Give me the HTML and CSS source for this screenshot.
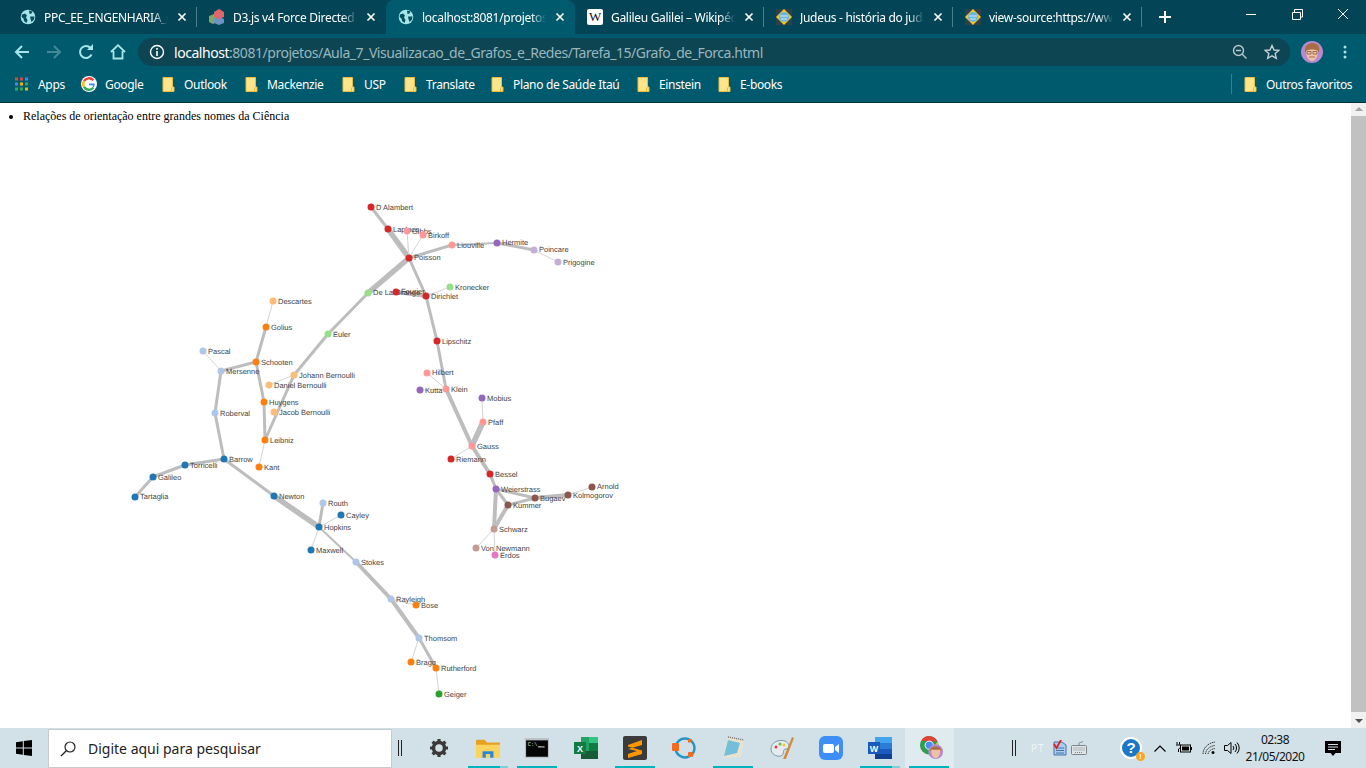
FILE: index.html
```html
<!DOCTYPE html>
<html lang="pt-BR">
<head>
<meta charset="utf-8">
<title>Grafo de Força</title>
<link rel="stylesheet" href="styles.css">
</head>
<body>
<svg class="defs" width="0" height="0" aria-hidden="true">
  <symbol id="globe" viewBox="0 0 16 16">
    <circle cx="8" cy="8" r="7.3" fill="#a6e6e8"/>
    <path d="M2 5.5 5 4.5 7 6.5 6 8.5 7.5 11 6.5 14 4 12 3.5 9.5 1.5 8ZM9 1.5 12.5 2.5 11.5 4.5 9.5 5ZM10 7.5 14.5 7.5 14 10.5 11.5 13 10.5 10Z" fill="#04505f"/>
  </symbol>
  <symbol id="x" viewBox="0 0 10 10">
    <path d="M1.5 1.5 8.5 8.5M8.5 1.5 1.5 8.5" stroke="#fff" stroke-width="1.7" fill="none"/>
  </symbol>
  <symbol id="folder" viewBox="0 0 12 15">
    <path d="M.5.5H10V10H11.5V14.5H.5Z" fill="#fee58c" stroke="#e8bd3c"/>
    <path d="M9 10.500V14" stroke="#e8bd3c"/>
  </symbol>
  <symbol id="diamond" viewBox="0 0 16 16">
    <rect width="16" height="16" fill="#30404a"/>
    <path d="M8 0 16 8 8 16 0 8Z" fill="#f4c81e"/>
    <circle cx="8" cy="8" r="5" fill="#6cb4e4"/>
    <path d="M4 7H12M5 10H11" stroke="#d6ecf8"/>
  </symbol>
</svg>

<header class="chrome">
  <div class="tabstrip">
    <div class="tab">
      <svg class="fav"><use href="#globe"/></svg>
      <span class="tab-title">PPC_EE_ENGENHARIA_Computação</span>
      <svg class="tab-x"><use href="#x"/></svg>
    </div>
    <div class="tab">
      <svg class="fav" viewBox="0 0 16 16">
        <path d="M0 7 5 5 8 7V13L4 15 0 13Z" fill="#7ca86c"/>
        <path d="M5 10 10 8 15 10V14L10 16 5 14Z" fill="#6f92c4"/>
        <path d="M5 3 10 0 15 3V8L10 10 5 8Z" fill="#e0666c"/>
      </svg>
      <span class="tab-title">D3.js v4 Force Directed Graph</span>
      <svg class="tab-x"><use href="#x"/></svg>
    </div>
    <div class="tab active">
      <svg class="fav"><use href="#globe"/></svg>
      <span class="tab-title">localhost:8081/projetos/Aula_7</span>
      <svg class="tab-x"><use href="#x"/></svg>
    </div>
    <div class="tab">
      <span class="fav-w">W</span>
      <span class="tab-title">Galileu Galilei – Wikipédia</span>
      <svg class="tab-x"><use href="#x"/></svg>
    </div>
    <div class="tab">
      <svg class="fav"><use href="#diamond"/></svg>
      <span class="tab-title">Judeus - história do judaísmo</span>
      <svg class="tab-x"><use href="#x"/></svg>
    </div>
    <div class="tab">
      <svg class="fav"><use href="#diamond"/></svg>
      <span class="tab-title">view-source:https://www.judeus</span>
      <svg class="tab-x"><use href="#x"/></svg>
    </div>
    <svg class="newtab" viewBox="0 0 12 12"><path d="M6 0V12M0 6H12" stroke="#fff" stroke-width="2"/></svg>
    <div class="winctl">
      <svg viewBox="0 0 46 30"><path d="M18 14.500H28" stroke="#fff"/></svg>
      <svg viewBox="0 0 46 30"><path d="M18.500 12.500H26.500V19.500H18.500ZM20.500 12V9.500H28.500V17H27" stroke="#fff" fill="none"/></svg>
      <svg viewBox="0 0 46 30"><path d="M18 9 28 19M28 9 18 19" stroke="#fff" fill="none"/></svg>
    </div>
  </div>

  <div class="toolbar">
    <svg class="tb-icon" viewBox="0 0 16 16"><path d="M15 8H2M8 2 2 8 8 14" stroke="#a6e6e8" stroke-width="2" fill="none"/></svg>
    <svg class="tb-icon" viewBox="0 0 16 16"><path d="M1 8H14M8 2 14 8 8 14" stroke="#3f8a96" stroke-width="2" fill="none"/></svg>
    <svg class="tb-icon" viewBox="0 0 16 16"><path d="M13.500 10.500A6 6 0 1 1 12.500 4" stroke="#a6e6e8" stroke-width="2" fill="none"/><path d="M9 6H15V0Z" fill="#a6e6e8"/></svg>
    <svg class="tb-icon" viewBox="0 0 16 16"><path d="M1 8 8 1.200 15 8M3.500 7V14.500H12.500V7" stroke="#a6e6e8" stroke-width="1.800" fill="none"/></svg>
    <div class="omnibox">
      <svg class="info" viewBox="0 0 16 16"><circle cx="8" cy="8" r="6.500" stroke="#fff" stroke-width="1.400" fill="none"/><path d="M8 7V12M8 4V5.800" stroke="#fff" stroke-width="1.600"/></svg>
      <span class="url"><b>localhost</b>:8081/projetos/Aula_7_Visualizacao_de_Grafos_e_Redes/Tarefa_15/Grafo_de_Forca.html</span>
      <svg class="omni-r" viewBox="0 0 16 16"><circle cx="6.500" cy="6.500" r="5" stroke="#b9c8cc" stroke-width="1.400" fill="none"/><path d="M4 6.500H9M10 10 14.500 14.500" stroke="#b9c8cc" stroke-width="1.400"/></svg>
      <svg class="omni-r" viewBox="0 0 16 16"><path d="M8 1.500 10 6 14.800 6.400 11.200 9.600 12.300 14.400 8 11.800 3.700 14.400 4.800 9.600 1.200 6.400 6 6Z" stroke="#c6d2d5" stroke-width="1.400" fill="none"/></svg>
    </div>
    <svg class="avatar" viewBox="0 0 22 22">
      <circle cx="11" cy="11" r="11" fill="#b78ad0"/>
      <path d="M4 11C3 4 8 2 12 2 17 2 19 6 18 11Z" fill="#a86d42"/>
      <path d="M5 10C7 8 15 8 17 10 17 16 14 20 11 20 8 20 5 16 5 10Z" fill="#eec0a4"/>
      <path d="M6 10.500H10V13H6ZM12 10.500H16V13H12Z" fill="none" stroke="#7a5238" stroke-width=".7"/>
      <path d="M8 16H14" stroke="#b06e5a"/>
    </svg>
    <svg class="menu" viewBox="0 0 4 14"><circle cx="2" cy="2" r="1.500" fill="#a6e6e8"/><circle cx="2" cy="7" r="1.500" fill="#a6e6e8"/><circle cx="2" cy="12" r="1.500" fill="#a6e6e8"/></svg>
  </div>

  <nav class="bookmarks">
    <div class="bm bm-apps">
      <svg class="bm-icon" viewBox="0 0 13 14">
        <path d="M0 0H3V3H0Z" fill="#e0483c"/><path d="M5 0H8V3H5Z" fill="#e0483c"/><path d="M10 0H13V3H10Z" fill="#4285f4"/>
        <path d="M0 5H3V8H0Z" fill="#4285f4"/><path d="M5 5H8V8H5Z" fill="#f4b400"/><path d="M10 5H13V8H10Z" fill="#34a853"/>
        <path d="M0 10H3V13H0Z" fill="#34a853"/><path d="M5 10H8V13H5Z" fill="#34a853"/><path d="M10 10H13V13H10Z" fill="#f4b400"/>
      </svg><span>Apps</span>
    </div>
    <div class="bm bm-google">
      <svg class="bm-icon" viewBox="0 0 16 16">
        <circle cx="8" cy="8" r="8" fill="#fff"/>
        <path d="M12.300 4.300A5.700 5.700 0 0 0 3 5.200" stroke="#ea4335" stroke-width="2.400" fill="none"/>
        <path d="M3 5.200A5.700 5.700 0 0 0 3 10.800" stroke="#fbbc05" stroke-width="2.400" fill="none"/>
        <path d="M3 10.800A5.700 5.700 0 0 0 12.300 11.800" stroke="#34a853" stroke-width="2.400" fill="none"/>
        <path d="M12.300 11.800C13.500 10.500 13.800 9 13.600 7.500H8V9.300H11.500" fill="#4285f4"/>
      </svg><span>Google</span>
    </div>
    <div class="bm"><svg class="bm-icon"><use href="#folder"/></svg><span>Outlook</span></div>
    <div class="bm"><svg class="bm-icon"><use href="#folder"/></svg><span>Mackenzie</span></div>
    <div class="bm"><svg class="bm-icon"><use href="#folder"/></svg><span>USP</span></div>
    <div class="bm"><svg class="bm-icon"><use href="#folder"/></svg><span>Translate</span></div>
    <div class="bm"><svg class="bm-icon"><use href="#folder"/></svg><span>Plano de Saúde Itaú</span></div>
    <div class="bm"><svg class="bm-icon"><use href="#folder"/></svg><span>Einstein</span></div>
    <div class="bm"><svg class="bm-icon"><use href="#folder"/></svg><span>E-books</span></div>
    <div class="bm bm-other"><svg class="bm-icon"><use href="#folder"/></svg><span>Outros favoritos</span></div>
  </nav>
</header>

<div class="viewport">
  <main class="page">
    <ul class="intro"><li>Relações de orientação entre grandes nomes da Ciência</li></ul>
    <svg class="graph" viewBox="0 125 1351 603" role="img" aria-label="Grafo de força">
      <g class="links">
        <line class="w3" x1="371" y1="207" x2="388" y2="229"/>
        <line class="w5" x1="388" y1="229" x2="409" y2="258"/>
        <line class="w1" x1="407" y1="231" x2="409" y2="258"/>
        <line class="w1" x1="423" y1="235" x2="409" y2="258"/>
        <line class="w3" x1="409" y1="258" x2="452" y2="245"/>
        <line class="w2" x1="452" y1="245" x2="497" y2="243"/>
        <line class="w3" x1="497" y1="243" x2="534" y2="250"/>
        <line class="w1" x1="534" y1="250" x2="558" y2="262"/>
        <line class="w5" x1="409" y1="258" x2="368" y2="293"/>
        <line class="w3" x1="368" y1="293" x2="328" y2="334"/>
        <line class="w3" x1="328" y1="334" x2="294" y2="375"/>
        <line class="w1" x1="294" y1="375" x2="269" y2="385"/>
        <line class="w3" x1="294" y1="375" x2="265" y2="440"/>
        <line class="w3" x1="264" y1="402" x2="265" y2="440"/>
        <line class="w3" x1="264" y1="402" x2="256" y2="362"/>
        <line class="w3" x1="256" y1="362" x2="266" y2="327"/>
        <line class="w1" x1="266" y1="327" x2="273" y2="301"/>
        <line class="w3" x1="256" y1="362" x2="221" y2="371"/>
        <line class="w1" x1="221" y1="371" x2="203" y2="351"/>
        <line class="w3" x1="221" y1="371" x2="215" y2="413"/>
        <line class="w3" x1="215" y1="413" x2="224" y2="459"/>
        <line class="w1" x1="265" y1="440" x2="259" y2="467"/>
        <line class="w3" x1="224" y1="459" x2="185" y2="465"/>
        <line class="w3" x1="185" y1="465" x2="153" y2="477"/>
        <line class="w3" x1="153" y1="477" x2="135" y2="497"/>
        <line class="w3" x1="224" y1="459" x2="274" y2="496"/>
        <line class="w5" x1="274" y1="496" x2="319" y2="527"/>
        <line class="w3" x1="319" y1="527" x2="323" y2="503"/>
        <line class="w1" x1="319" y1="527" x2="341" y2="515"/>
        <line class="w1" x1="319" y1="527" x2="311" y2="550"/>
        <line class="w2" x1="319" y1="527" x2="356" y2="562"/>
        <line class="w4" x1="356" y1="562" x2="391" y2="599"/>
        <line class="w1" x1="391" y1="599" x2="416" y2="605"/>
        <line class="w4" x1="391" y1="599" x2="419" y2="638"/>
        <line class="w1" x1="419" y1="638" x2="411" y2="662"/>
        <line class="w3" x1="419" y1="638" x2="436" y2="668"/>
        <line class="w1" x1="436" y1="668" x2="439" y2="694"/>
        <line class="w3" x1="409" y1="258" x2="426" y2="296"/>
        <line class="w4" x1="396" y1="292" x2="426" y2="296"/>
        <line class="w1" x1="426" y1="296" x2="450" y2="287"/>
        <line class="w3" x1="426" y1="296" x2="437" y2="341"/>
        <line class="w3" x1="437" y1="341" x2="446" y2="389"/>
        <line class="w1" x1="446" y1="389" x2="427" y2="373"/>
        <line class="w1" x1="446" y1="389" x2="420" y2="390"/>
        <line class="w4" x1="446" y1="389" x2="472" y2="446"/>
        <line class="w5" x1="472" y1="446" x2="483" y2="422"/>
        <line class="w1" x1="483" y1="422" x2="482" y2="398"/>
        <line class="w1" x1="472" y1="446" x2="451" y2="459"/>
        <line class="w4" x1="472" y1="446" x2="490" y2="474"/>
        <line class="w3" x1="490" y1="474" x2="496" y2="489"/>
        <line class="w3" x1="496" y1="489" x2="535" y2="498"/>
        <line class="w3" x1="496" y1="489" x2="508" y2="505"/>
        <line class="w3" x1="535" y1="498" x2="508" y2="505"/>
        <line class="w4" x1="535" y1="498" x2="568" y2="495"/>
        <line class="w1" x1="568" y1="495" x2="592" y2="487"/>
        <line class="w4" x1="508" y1="505" x2="494" y2="529"/>
        <line class="w4" x1="496" y1="489" x2="494" y2="529"/>
        <line class="w1" x1="494" y1="529" x2="476" y2="548"/>
        <line class="w1" x1="494" y1="529" x2="495" y2="555"/>
      </g>
      <g class="labels">
        <text x="376" y="210">D Alambert</text><text x="393" y="232">Laplace</text><text x="412" y="234">Gibbs</text><text x="428" y="238">Birkoff</text>
        <text x="457" y="248">Liouville</text><text x="502" y="245">Hermite</text><text x="539" y="252">Poincare</text><text x="563" y="265">Prigogine</text>
        <text x="414" y="260">Poisson</text><text x="373" y="295">De La Grange</text><text x="401" y="294">Fourier</text><text x="431" y="299">Dirichlet</text>
        <text x="455" y="290">Kronecker</text><text x="442" y="344">Lipschitz</text><text x="333" y="337">Euler</text><text x="278" y="304">Descartes</text>
        <text x="271" y="330">Golius</text><text x="261" y="365">Schooten</text><text x="208" y="354">Pascal</text><text x="226" y="374">Mersenne</text>
        <text x="299" y="378">Johann Bernoulli</text><text x="274" y="388">Daniel Bernoulli</text><text x="269" y="405">Huygens</text><text x="279" y="415">Jacob Bernoulli</text>
        <text x="220" y="416">Roberval</text><text x="270" y="443">Leibniz</text><text x="264" y="470">Kant</text><text x="229" y="462">Barrow</text>
        <text x="190" y="468">Torricelli</text><text x="158" y="480">Galileo</text><text x="140" y="499">Tartaglia</text><text x="279" y="499">Newton</text>
        <text x="328" y="506">Routh</text><text x="346" y="518">Cayley</text><text x="324" y="530">Hopkins</text><text x="316" y="553">Maxwell</text>
        <text x="361" y="565">Stokes</text><text x="396" y="602">Rayleigh</text><text x="421" y="608">Bose</text><text x="424" y="641">Thomsom</text>
        <text x="416" y="665">Bragg</text><text x="441" y="671">Rutherford</text><text x="444" y="697">Geiger</text><text x="432" y="375">Hilbert</text>
        <text x="425" y="393">Kutta</text><text x="451" y="392">Klein</text><text x="487" y="401">Mobius</text><text x="488" y="425">Pfaff</text>
        <text x="477" y="449">Gauss</text><text x="456" y="462">Riemann</text><text x="495" y="477">Bessel</text><text x="501" y="492">Weierstrass</text>
        <text x="540" y="501">Bugaev</text><text x="573" y="498">Kolmogorov</text><text x="597" y="489">Arnold</text><text x="513" y="508">Kummer</text>
        <text x="499" y="532">Schwarz</text><text x="481" y="551">Von Newmann</text><text x="500" y="558">Erdos</text>
      </g>
      <g class="nodes">
        <circle class="n-red" cx="371" cy="207" r="3.500"/><circle class="n-red" cx="388" cy="229" r="3.500"/><circle class="n-pink" cx="407" cy="231" r="3.500"/><circle class="n-pink" cx="423" cy="235" r="3.500"/>
        <circle class="n-pink" cx="452" cy="245" r="3.500"/><circle class="n-purple" cx="497" cy="243" r="3.500"/><circle class="n-lilac" cx="534" cy="250" r="3.500"/><circle class="n-lilac" cx="558" cy="262" r="3.500"/>
        <circle class="n-red" cx="409" cy="258" r="3.500"/><circle class="n-lime" cx="368" cy="293" r="3.500"/><circle class="n-red" cx="396" cy="292" r="3.500"/><circle class="n-red" cx="426" cy="296" r="3.500"/>
        <circle class="n-lime" cx="450" cy="287" r="3.500"/><circle class="n-red" cx="437" cy="341" r="3.500"/><circle class="n-lime" cx="328" cy="334" r="3.500"/><circle class="n-peach" cx="273" cy="301" r="3.500"/>
        <circle class="n-orange" cx="266" cy="327" r="3.500"/><circle class="n-orange" cx="256" cy="362" r="3.500"/><circle class="n-sky" cx="203" cy="351" r="3.500"/><circle class="n-sky" cx="221" cy="371" r="3.500"/>
        <circle class="n-peach" cx="294" cy="375" r="3.500"/><circle class="n-peach" cx="269" cy="385" r="3.500"/><circle class="n-orange" cx="264" cy="402" r="3.500"/><circle class="n-peach" cx="274" cy="412" r="3.500"/>
        <circle class="n-sky" cx="215" cy="413" r="3.500"/><circle class="n-orange" cx="265" cy="440" r="3.500"/><circle class="n-orange" cx="259" cy="467" r="3.500"/><circle class="n-blue" cx="224" cy="459" r="3.500"/>
        <circle class="n-blue" cx="185" cy="465" r="3.500"/><circle class="n-blue" cx="153" cy="477" r="3.500"/><circle class="n-blue" cx="135" cy="497" r="3.500"/><circle class="n-blue" cx="274" cy="496" r="3.500"/>
        <circle class="n-sky" cx="323" cy="503" r="3.500"/><circle class="n-blue" cx="341" cy="515" r="3.500"/><circle class="n-blue" cx="319" cy="527" r="3.500"/><circle class="n-blue" cx="311" cy="550" r="3.500"/>
        <circle class="n-sky" cx="356" cy="562" r="3.500"/><circle class="n-sky" cx="391" cy="599" r="3.500"/><circle class="n-orange" cx="416" cy="605" r="3.500"/><circle class="n-sky" cx="419" cy="638" r="3.500"/>
        <circle class="n-orange" cx="411" cy="662" r="3.500"/><circle class="n-orange" cx="436" cy="668" r="3.500"/><circle class="n-green" cx="439" cy="694" r="3.500"/><circle class="n-pink" cx="427" cy="373" r="3.500"/>
        <circle class="n-purple" cx="420" cy="390" r="3.500"/><circle class="n-pink" cx="446" cy="389" r="3.500"/><circle class="n-purple" cx="482" cy="398" r="3.500"/><circle class="n-pink" cx="483" cy="422" r="3.500"/>
        <circle class="n-pink" cx="472" cy="446" r="3.500"/><circle class="n-red" cx="451" cy="459" r="3.500"/><circle class="n-red" cx="490" cy="474" r="3.500"/><circle class="n-purple" cx="496" cy="489" r="3.500"/>
        <circle class="n-brown" cx="535" cy="498" r="3.500"/><circle class="n-brown" cx="568" cy="495" r="3.500"/><circle class="n-brown" cx="592" cy="487" r="3.500"/><circle class="n-brown" cx="508" cy="505" r="3.500"/>
        <circle class="n-tan" cx="494" cy="529" r="3.500"/><circle class="n-tan" cx="476" cy="548" r="3.500"/><circle class="n-magenta" cx="495" cy="555" r="3.500"/>
      </g>
    </svg>
  </main>
  <div class="scrollbar">
    <span class="arrow-up"></span>
    <div class="thumb"></div>
    <span class="arrow-down"></span>
  </div>
</div>

<footer class="taskbar">
  <svg class="start" viewBox="0 0 16 16"><path d="M0 2.300 6.800 1.300V7.500H0ZM7.800 1.100 16 0V7.500H7.800ZM0 8.500H6.800V14.700L0 13.700ZM7.800 8.500H16V16L7.800 14.900Z" fill="#000"/></svg>
  <div class="search">
    <svg class="search-ico" viewBox="0 0 16 16"><circle cx="10" cy="6" r="5" stroke="#222" stroke-width="1.200" fill="none"/><path d="M6.300 9.700 1 15" stroke="#222" stroke-width="1.300"/></svg>
    <span>Digite aqui para pesquisar</span>
  </div>
  <span class="grip"></span>
  <div class="tb-apps">
    <div class="app app-gear">
      <svg viewBox="0 0 20 20"><circle cx="10" cy="10" r="5.500" fill="none" stroke="#3a3a3a" stroke-width="3.500"/><path d="M10 1V4M10 16V19M1 10H4M16 10H19M3.600 3.600 5.800 5.800M14.200 14.200 16.400 16.400M16.400 3.600 14.200 5.800M5.800 14.200 3.600 16.400" stroke="#3a3a3a" stroke-width="3.200"/></svg>
    </div>
    <div class="app run split">
      <svg viewBox="0 0 22 20"><path d="M0 3.500A1 1 0 0 1 1 2.500H8L10 5H22V18H0Z" fill="#e8a020"/><path d="M0 7H22V19H0Z" fill="#fbd35f"/><path d="M6 19V13H16V19H13V15.500H9V19Z" fill="#2b88d8"/></svg>
    </div>
    <div class="app run">
      <svg viewBox="0 0 22 20"><rect y="1" width="22" height="18" fill="#b9bec2"/><rect x="1" y="3" width="20" height="15" fill="#050505"/><text class="cmd-text" x="2.500" y="8.500">C:\_</text><path d="M12 9H18" stroke="#ccc"/></svg>
    </div>
    <div class="app">
      <svg viewBox="0 0 24 24"><rect x="7" y="1" width="17" height="22" fill="#21a366"/><rect x="15" y="1" width="9" height="6" fill="#33c481"/><rect x="15" y="7" width="9" height="8" fill="#107c41"/><rect x="7" y="15" width="17" height="8" fill="#185c37"/><rect y="6" width="12" height="12" fill="#107c41"/><text class="x-text" x="6" y="15.500">X</text></svg>
    </div>
    <div class="app run">
      <svg viewBox="0 0 24 24"><rect width="24" height="24" rx="2" fill="#3b3b3b"/><path d="M19 4 5 9V13L19 9ZM5 10.500 19 14.500V18L5 22V18L14 15 5 13Z" fill="#ff9800"/></svg>
    </div>
    <div class="app">
      <svg viewBox="0 0 24 24"><circle cx="13" cy="12" r="9.500" fill="none" stroke="#2596c4" stroke-width="2.400"/><rect y="7" width="7" height="8" rx="1" fill="#f26c1f"/><rect x="16" y="16" width="5" height="5" rx="1" fill="#f26c1f"/><rect x="16" y="3" width="3.500" height="3.500" fill="#f26c1f"/></svg>
    </div>
    <div class="app run">
      <svg viewBox="0 0 24 24"><path d="M7 1 23 4 20 21 2 22Z" fill="#e8e2d0"/><path d="M7 4 19 7 16 17 3 20Z" fill="#74bfd8"/><path d="M7 1 23 4" stroke="#777" stroke-width="1.500" stroke-dasharray="1 1"/></svg>
    </div>
    <div class="app">
      <svg viewBox="0 0 24 24"><path d="M1 13C1 6 9 3 15 5 20 7 20 13 16 13 12 13 15 18 11 20 6 21 1 18 1 13Z" fill="#e5ecf0" stroke="#7e98a8"/><circle cx="6" cy="11" r="1.500" fill="#e03c3c"/><circle cx="10" cy="8" r="1.500" fill="#6fb83c"/><circle cx="14" cy="9" r="1.500" fill="#e8c93c"/><path d="M13 23 22 1 24 2 16 23Z" fill="#d28d3c"/></svg>
    </div>
    <div class="app">
      <svg viewBox="0 0 24 24"><rect width="24" height="24" rx="6" fill="#3d8ff5"/><rect x="4" y="8" width="11" height="9" rx="2" fill="#fff"/><path d="M16 11 20 8V17L16 14Z" fill="#fff"/></svg>
    </div>
    <div class="app run split">
      <svg viewBox="0 0 24 24"><rect x="7" y="1" width="17" height="22" fill="#2b7cd3"/><rect x="7" y="1" width="17" height="6" fill="#41a5ee"/><rect x="7" y="13" width="17" height="5" fill="#185abd"/><rect x="7" y="18" width="17" height="5" fill="#103f91"/><rect y="6" width="12" height="12" fill="#185abd"/><text class="x-text" x="6" y="15.500">W</text></svg>
    </div>
    <div class="app run active">
      <svg class="chrome-ico" viewBox="0 0 26 26">
        <circle cx="10" cy="10" r="10" fill="#2f9e4f"/>
        <path d="M1.300 5A10 10 0 0 1 19 6H10Z" fill="#e0433a"/>
        <path d="M19 6A10 10 0 0 1 12 19.800L15 12Z" fill="#f8c72e"/>
        <circle cx="10" cy="10" r="4.500" fill="#4a8cf0" stroke="#fff"/>
        <circle cx="17" cy="17" r="8" fill="#b78ad0"/>
        <path d="M11 16C11 10 23 10 23 16Z" fill="#a86d42"/>
        <path d="M12 15H22C22 20 20 24 17 24 14 24 12 20 12 15Z" fill="#eec0a4"/>
      </svg>
    </div>
  </div>
  <div class="tray">
    <span class="grip tray-grip"></span>
    <span class="lang">PT</span>
    <svg class="ico-doc" viewBox="0 0 14 16"><path d="M1 2H9L13 5V15H1Z" fill="#a9cdf0" stroke="#4472a8"/><path d="M3 8H11M3 10.500H11M3 13H11" stroke="#4472a8"/><path d="M1 4 3.500 8 8 0" stroke="#e02020" stroke-width="1.800" fill="none"/></svg>
    <svg class="ico-kb" viewBox="0 0 16 14"><path d="M8 4V2.500C8 1 10 2 12 .5" stroke="#7c858a" fill="none"/><rect x=".5" y="4.500" width="15" height="9" rx="1" fill="#dfe4e6" stroke="#7c858a"/><path d="M2.500 7H13.500M2.500 9H13.500M4 11.500H12" stroke="#7c858a" stroke-dasharray="1 1"/></svg>
    <span class="help">?<i>!</i></span>
    <svg class="ico-chev" viewBox="0 0 12 7"><path d="M.5 6.500 6 1 11.500 6.500" stroke="#000" stroke-width="1.200" fill="none"/></svg>
    <svg class="ico-batt" viewBox="0 0 16 12"><rect x="4.500" y="3" width="10" height="7" fill="none" stroke="#000"/><rect x="6" y="4.500" width="7" height="4"/><rect x="15" y="5" width="1" height="3"/><path d="M1 0V2.500M3.500 0V2.500M0 3H4.500V5C4.500 6 3 6.500 2.500 7V10" stroke="#000" fill="none"/></svg>
    <svg class="ico-wifi" viewBox="0 0 14 14"><path d="M1 13C1 7 6 2 13 1M3.500 13C3.500 9 7.500 5 13 4.500M6 13C6 10.500 9 8 13 7.500" stroke="#333" stroke-dasharray="1.500 .7" fill="none"/><circle cx="11" cy="11.500" r="1.500"/></svg>
    <svg class="ico-vol" viewBox="0 0 16 14"><path d="M.5 4.500H3.500L7 1.500V12.500L3.500 9.500H.5Z" fill="none" stroke="#000"/><path d="M9 5A3 3 0 0 1 9 9M11 3A6 6 0 0 1 11 11M13 1.500A8 8 0 0 1 13 12.500" stroke="#000" fill="none"/></svg>
    <div class="clock"><span>02:38</span><span>21/05/2020</span></div>
    <svg class="ico-notif" viewBox="0 0 16 15"><path d="M0 0H16V12H10.500L8 15 5.500 12H0Z" fill="#000"/><path d="M3 3.500H13M3 6H13M3 8.500H10" stroke="#d0e0e8"/></svg>
  </div>
</footer>
</body>
</html>
```

FILE: styles.css
```css
* { box-sizing: border-box; }
html, body { margin: 0; height: 100%; overflow: hidden; }
body {
  width: 1366px;
  height: 768px;
  display: flex;
  flex-direction: column;
  font-family: "Noto Sans", "Open Sans", sans-serif;
  background: #fff;
}
.defs { position: absolute; }

/* browser chrome */
.chrome { flex: none; height: 103px; background: #005a6e; color: #fff; display: flex; flex-direction: column; }
.tabstrip { height: 34px; background: #034556; display: flex; padding-left: 8px; align-items: stretch; }
.tab {
  width: 189px;
  display: flex;
  align-items: center;
  padding-left: 12px;
  font-size: 12px;
  letter-spacing: -.3px;
  position: relative;
}
.tab::after { content: ""; position: absolute; right: 0; top: 7px; bottom: 7px; width: 1px; background: #4c7e8a; }
.tab:nth-child(2)::after, .tab:nth-child(3)::after { display: none; }
.tab.active { background: #005a6e; border-radius: 8px 8px 0 0; }
.fav { width: 16px; height: 16px; flex: none; }
.fav-w {
  width: 16px; height: 16px; flex: none; background: #fff; color: #111; border-radius: 2px;
  font: 13px/16px "Liberation Serif", serif; text-align: center;
}
.tab-title {
  margin-left: 8px;
  width: 124px;
  white-space: nowrap;
  overflow: hidden;
  -webkit-mask-image: linear-gradient(to right, #000 88%, transparent);
  mask-image: linear-gradient(to right, #000 88%, transparent);
}
.tab-x { width: 10px; height: 10px; margin-left: 9px; flex: none; }
.newtab { width: 12px; height: 12px; margin: 11px 0 0 17px; flex: none; }
.winctl { margin-left: auto; display: flex; }
.winctl svg { width: 46px; height: 30px; }

.toolbar { height: 33px; display: flex; align-items: center; padding: 3px 0 0 14px; }
.tb-icon { width: 16px; height: 16px; margin-right: 16px; flex: none; }
.omnibox {
  width: 1152px;
  height: 28px;
  margin-left: -4px;
  background: #0d4553;
  border-radius: 14px;
  display: flex;
  align-items: center;
  padding: 0 10px 0 11px;
  font-size: 14px;
}
.info { width: 16px; height: 16px; flex: none; }
.url { margin-left: 8px; flex: 1; color: #9ab6bd; white-space: nowrap; letter-spacing: -.46px; padding-left: 1px; }
.url b { color: #fff; font-weight: 400; }
.omni-r { width: 16px; height: 16px; margin-left: 16px; flex: none; }
.avatar { width: 22px; height: 22px; margin-left: 11px; flex: none; }
.menu { width: 4px; height: 14px; margin-left: 20px; flex: none; }

.bookmarks {
  height: 36px;
  border-bottom: 1px solid #02323e;
  display: grid;
  grid-template-columns: 66px 81px 83px 97px 62px 87px 146px 81px 513px auto;
  padding: 0 0 1px 15px;
  align-items: center;
  font-size: 12px;
  letter-spacing: -.33px;
}
.bm { display: flex; align-items: center; white-space: nowrap; }
.bm-icon { width: 13px; height: 15px; flex: none; margin-right: 9px; }
.bm-apps .bm-icon { margin-right: 10px; }
.bm-google .bm-icon { width: 16px; height: 16px; margin-right: 8px; }
.bm-other { border-left: 1px solid #3f7f8d; padding-left: 12px; height: 20px; width: 135px; }

/* page viewport */
.viewport { flex: 1; min-height: 0; display: flex; }
.page { flex: 1; min-width: 0; overflow: hidden; display: flex; flex-direction: column; }
.intro {
  margin: 0;
  height: 22px;
  padding: 6px 0 0 23px;
  font: 12px/14px "Liberation Serif", serif;
  color: #000;
}
.graph { flex: 1; min-height: 0; width: 100%; display: block; }
.links line { stroke: #bdbdbd; }
.links .w1 { stroke-width: 1; stroke: #d4d4d4; }
.w2 { stroke-width: 2; }
.w3 { stroke-width: 3; }
.w4 { stroke-width: 4; }
.w5 { stroke-width: 5.5; }
.labels text { font: 7.5px "Liberation Sans", Arial, sans-serif; fill: #444; text-rendering: geometricPrecision; }
.n-blue { fill: #1f77b4; }
.n-sky { fill: #aec7e8; }
.n-orange { fill: #ff7f0e; }
.n-peach { fill: #ffbb78; }
.n-green { fill: #2ca02c; }
.n-lime { fill: #98df8a; }
.n-red { fill: #d62728; }
.n-pink { fill: #ff9896; }
.n-purple { fill: #9467bd; }
.n-lilac { fill: #c5b0d5; }
.n-brown { fill: #8c564b; }
.n-tan { fill: #c49c94; }
.n-magenta { fill: #e377c2; }

.scrollbar { width: 15px; flex: none; background: #f1f1f1; display: flex; flex-direction: column; align-items: center; }
.thumb { flex: 1; width: 15px; background: #c1c1c1; margin: 5px 0 7px; }
.arrow-up, .arrow-down { width: 0; height: 0; border: 4px solid transparent; flex: none; }
.arrow-up { border-bottom: 4px solid #a3a3a3; margin-top: 4px; border-top-width: 0; }
.arrow-down { border-top: 4px solid #505050; margin-bottom: 5px; border-bottom-width: 0; }

/* taskbar */
.taskbar { flex: none; height: 40px; background: #d2e1e8; display: flex; align-items: center; color: #111; }
.start { width: 16px; height: 16px; margin-left: 16px; flex: none; }
.search {
  width: 344px;
  height: 39px;
  margin: 1px 0 0 16px;
  background: #fff;
  border: 1px solid #c7c9ca;
  display: flex;
  align-items: center;
  padding-left: 11px;
  font-size: 14px;
  color: #222;
}
.search-ico { width: 16px; height: 16px; margin-right: 12px; flex: none; }
.grip { width: 4px; height: 16px; margin-left: 6px; border-left: 1px solid #222; border-right: 1px solid #222; flex: none; }
.tb-apps { display: flex; height: 40px; margin-left: 12.5px; }
.app { width: 49px; height: 40px; display: flex; align-items: center; justify-content: center; position: relative; }
.app svg { width: 24px; height: 24px; }
.app .chrome-ico { margin-left: 6px; }
.app-gear svg { width: 20px; height: 20px; }
.app.run::after { content: ""; position: absolute; left: 4.5px; right: 4.5px; bottom: 0; height: 2px; background: #00b4c0; }
.app.split::after { background: linear-gradient(to right, #00b4c0 80%, #7fd0d6 80%); }
.app.active { background: #e0ebef; }
.cmd-text { font: 5px "Liberation Mono", monospace; fill: #ddd; }
.x-text { font: bold 9px "Liberation Sans", sans-serif; fill: #fff; text-anchor: middle; }
.tray { display: flex; align-items: center; margin-left: auto; height: 40px; }
.tray-grip { margin: 0 15px 0 0; }
.lang { font-size: 10px; color: #eef4f2; width: 16px; margin-right: 6px; letter-spacing: 1px; }
.ico-doc { width: 14px; height: 16px; margin-right: 4px; }
.ico-kb { width: 16px; height: 14px; margin-right: 33px; }
.help {
  width: 22px; height: 22px; border-radius: 50%; background: #1b78c8; border: 2px solid #fff;
  color: #fff; font: bold 15px/18px "Liberation Sans", sans-serif; text-align: center; position: relative; margin-right: 12px;
}
.help i {
  position: absolute; right: -5px; bottom: -4px; width: 9px; height: 9px; border-radius: 50%;
  background: #f5a623; font: bold 7px/9px "Liberation Sans", sans-serif;
}
.ico-chev { width: 12px; height: 7px; margin-right: 10px; }
.ico-batt { width: 16px; height: 12px; margin-right: 10px; }
.ico-wifi { width: 14px; height: 14px; margin-right: 8px; }
.ico-vol { width: 16px; height: 14px; }
.clock { width: 70px; display: flex; flex-direction: column; align-items: center; font-size: 12px; line-height: 17px; letter-spacing: -.5px; }
.ico-notif { width: 16px; height: 15px; margin: 0 25px 0 15px; }
```
